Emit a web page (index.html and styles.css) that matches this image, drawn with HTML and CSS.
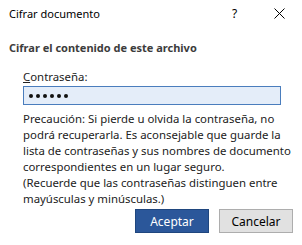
FILE: index.html
```html
<!DOCTYPE html>
<html lang="es">
<head>
    <meta charset="UTF-8">
    <meta name="viewport" content="width=device-width, initial-scale=1.0">
    <title>Cifrar documento</title>
    <link rel="stylesheet" href="styles.css">
</head>
<body>
    <div class="dialog">
        <div class="titlebar">
            <span class="title">Cifrar documento</span>
            <span class="help">?</span>
            <svg class="close" width="11" height="11" viewBox="0 0 11 11">
                <path d="M0.5 0.5 L10.5 10.5 M10.5 0.5 L0.5 10.5" stroke="#000" stroke-width="1" fill="none"/>
            </svg>
        </div>

        <h1>Cifrar el contenido de este archivo</h1>

        <div class="field">
            <label for="password"><u>C</u>ontraseña:</label>
            <div class="input" id="password">
                <span class="dot"></span><span class="dot"></span><span class="dot"></span><span class="dot"></span><span class="dot"></span><span class="dot"></span>
            </div>
            <p class="warning">
                Precaución: Si pierde u olvida la contraseña, no<br>
                podrá recuperarla. Es aconsejable que guarde la<br>
                lista de contraseñas y sus nombres de documento<br>
                correspondientes en un lugar seguro.<br>
                (Recuerde que las contraseñas distinguen entre<br>
                mayúsculas y minúsculas.)
            </p>
        </div>

        <div class="buttons">
            <button class="btn primary">Aceptar</button>
            <button class="btn">Cancelar</button>
        </div>
    </div>
</body>
</html>
```

FILE: styles.css
```css
body {
    margin: 0;
    background-color: #ffffff;
    font-family: 'Segoe UI', 'Noto Sans', sans-serif;
    font-size: 11.4px;
    color: #000;
}
.dialog {
    width: 302px;
    height: 245px;
    box-sizing: border-box;
    padding: 0 9px;
}
.titlebar {
    display: flex;
    align-items: center;
    height: 27px;
}
.title {
    flex: 1;
    font-size: 11px;
}
.help {
    width: 10px;
    margin-right: 32px;
    font-size: 12px;
}
.close {
    margin-right: 8px;
}
h1 {
    margin: 13px 0 0;
    font-size: 11px;
    font-weight: bold;
    color: #3c3c3c;
    line-height: 16px;
}
.field {
    margin: 13px 0 0 14px;
}
label {
    display: block;
    line-height: 16px;
    color: #222;
}
.input {
    margin-top: 1px;
    width: 251px;
    height: 17px;
    box-sizing: content-box;
    background-color: #e4edf9;
    border: 1px solid #4a7dbd;
    display: flex;
    align-items: center;
    gap: 3px;
    padding-left: 5px;
}
.dot {
    width: 4px;
    height: 4px;
    border-radius: 50%;
    background-color: #111;
}
.warning {
    margin: 6px 0 0;
    line-height: 16px;
    color: #222;
    white-space: nowrap;
}
.buttons {
    display: flex;
    justify-content: flex-end;
    gap: 10px;
    margin-top: 2px;
}
.btn {
    width: 74px;
    height: 24px;
    font-family: inherit;
    font-size: 12px;
    background-color: #e1e1e1;
    border: 1px solid #adadad;
    color: #000;
    padding: 0;
}
.primary {
    background-color: #2b579a;
    border-color: #1f467e;
    color: #fff;
}
```
